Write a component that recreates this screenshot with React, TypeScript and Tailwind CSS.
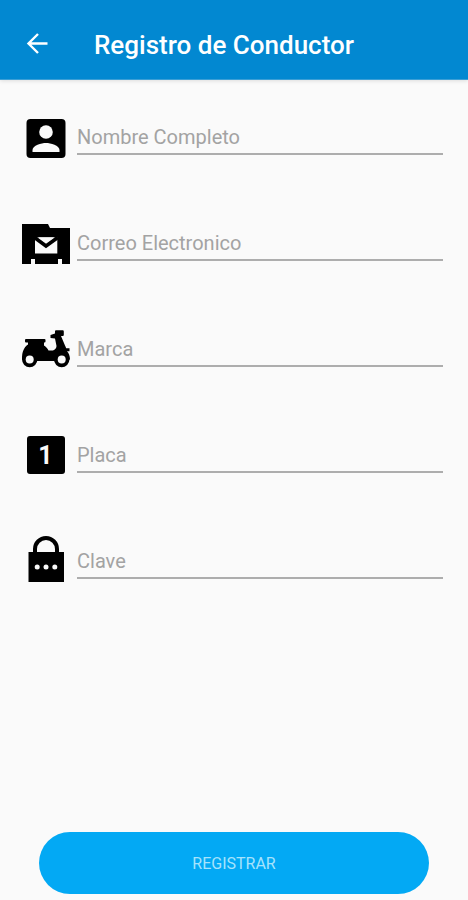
import type { ReactNode } from "react";

function Icon({ children }: { children: ReactNode }) {
  return (
    <svg viewBox="0 0 48 48" className="size-12 shrink-0 overflow-visible text-black" fill="currentColor" aria-hidden="true">
      {children}
    </svg>
  );
}

const PersonIcon = (
  <Icon>
    <rect x="4.5" y="6" width="39" height="39" rx="4" />
    <circle cx="24" cy="19" r="6.8" fill="#fafafa" />
    <path d="M10.500 39v-2c0-4.600 9-7 13.500-7s13.500 2.400 13.500 7v2z" fill="#fafafa" />
  </Icon>
);

const MailIcon = (
  <Icon>
    <path d="M0 5h26l2 4h20v36h-8v-5h-4v5H13v-5H9v5H0z" />
    <path d="M13 18.500v16h22.300v-16z" fill="#fafafa" />
    <path d="M12.500 18.500 24 27l11.800-8.500" fill="none" stroke="currentColor" strokeWidth="3.600" />
    <path d="M16 18.300h16.500L24 24z" fill="#fafafa" />
  </Icon>
);

const ScooterIcon = (
  <Icon>
    <rect x="3" y="14" width="20.500" height="3.600" rx="1" />
    <path d="M6 17h16v3.500c2 1.200 3.500 3 4.500 5h4.500c2-.8 3.500-2.500 3.500-4.500l-1.500-7.500-4.500-.5v-3l4.500-1.500V6.500c0-.8.500-1.200 1.200-1.200h6.300c.8 0 1.300.4 1.300 1.200v3.300c0 .8-.5 1.200-1.300 1.200h-1.500l4 9.500c.6 1 .9 1.800 1.200 2.800h3.300v3h-2.500c1.800 1.800 3 4.700 3 8.200l-8 1.500H8l-8-1.500c0-4.500.3-7 1.500-9.500s2.500-4.500 4.500-5.500z" />
    <circle cx="7.700" cy="34.500" r="7.700" />
    <circle cx="39.700" cy="34.500" r="7.700" />
    <circle cx="7.700" cy="34.500" r="4" fill="#fafafa" />
    <circle cx="39.700" cy="34.500" r="4" fill="#fafafa" />
  </Icon>
);

const NumberIcon = (
  <Icon>
    <rect x="5" y="5" width="38" height="38" rx="3" />
    <text x="23.500" y="33" textAnchor="middle" fontSize="25" fontWeight="700" fill="#fafafa">
      1
    </text>
  </Icon>
);

const LockIcon = (
  <Icon>
    <path d="M6.500 15H11v-3a13 13 0 0 1 26 0v3h5v30H6.500zM15 15h18v-3a9 9 0 0 0-18 0z" fillRule="evenodd" />
    <circle cx="15.200" cy="30" r="2.500" fill="#fafafa" />
    <circle cx="24" cy="30" r="2.500" fill="#fafafa" />
    <circle cx="32.800" cy="30" r="2.500" fill="#fafafa" />
  </Icon>
);

const fields = [
  { id: "nombre", label: "Nombre Completo", type: "text", icon: PersonIcon },
  { id: "correo", label: "Correo Electronico", type: "email", icon: MailIcon },
  { id: "marca", label: "Marca", type: "text", icon: ScooterIcon },
  { id: "placa", label: "Placa", type: "text", icon: NumberIcon },
  { id: "clave", label: "Clave", type: "password", icon: LockIcon },
];

export default function App() {
  return (
    <div className="flex min-h-screen flex-col bg-[#fafafa] font-[Roboto,sans-serif]">
      <header className="flex h-20 items-center border-b border-[#3b9fd6] bg-[#0288d1] px-6 pt-2 text-white shadow-[0_1px_4px_rgba(0,0,0,0.12)]">
        <button type="button" aria-label="Volver" className="flex size-7 items-center justify-center">
          <svg viewBox="0 0 28 28" className="size-7" fill="none" stroke="currentColor" strokeWidth="2.400" aria-hidden="true">
            <path d="M23.500 13.500H4M14 4 4.500 13.500l9.500 9.500" />
          </svg>
        </button>
        <h1 className="ml-[42px] pt-0.5 text-[26px] leading-8 font-medium">Registro de Conductor</h1>
      </header>
      <form className="flex flex-1 flex-col" onSubmit={(e) => e.preventDefault()}>
        <div className="flex flex-col gap-[58px] pt-[33px] pr-[25px] pb-12 pl-[22px]">
          {fields.map((f) => (
            <div key={f.id} className="flex h-12 gap-[7px]">
              <label htmlFor={f.id} aria-label={f.label}>
                {f.icon}
              </label>
              <input
                id={f.id}
                type={f.type}
                placeholder={f.label}
                className="h-[42px] min-w-0 flex-1 border-b-2 border-[#adadad] bg-transparent pt-2 text-xl text-black outline-none placeholder:text-[#a3a3a3]"
              />
            </div>
          ))}
        </div>
        <button type="submit" className="mx-[39px] mt-auto mb-[6px] h-[62px] rounded-full bg-[#03a9f4] pt-0.5 text-base text-[#a6e3fc]">
          REGISTRAR
        </button>
      </form>
    </div>
  );
}
